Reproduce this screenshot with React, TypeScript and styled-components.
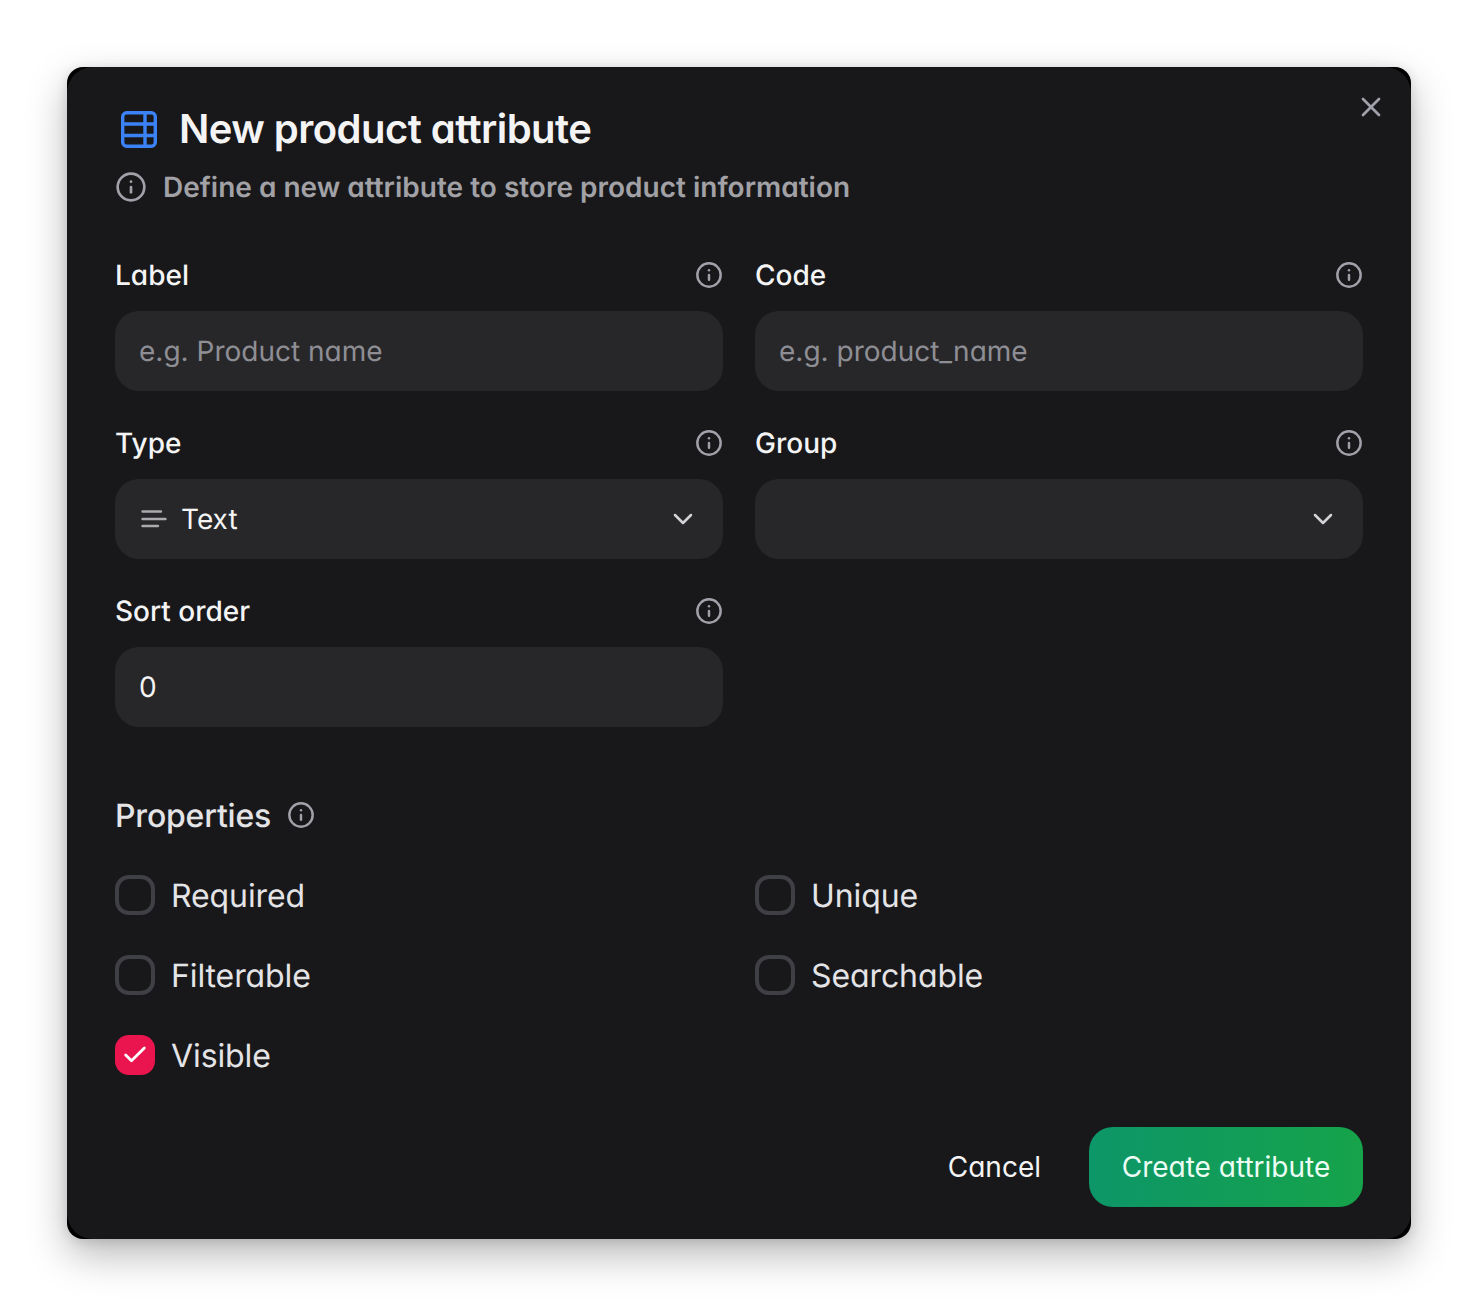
import React from "react";
import styled, { createGlobalStyle } from "styled-components";
import { Check, ChevronDown, Info, X } from "lucide-react";

const GlobalStyle = createGlobalStyle`
  html, body {
    margin: 0;
    background: #fff;
  }
  * {
    box-sizing: border-box;
  }
  body {
    font-family: Inter, "Liberation Sans", sans-serif;
    font-feature-settings: "cv11" 1;
    text-rendering: geometricPrecision;
  }
`;

const Page = styled.div`
  width: 1478px;
  height: 1306px;
  padding: 67px;
`;

// black sits behind the panel and only shows at the corners
const Shell = styled.div`
  width: 1344px;
  height: 1172px;
  border-radius: 16px;
  background: #000;
  box-shadow: 0 16px 40px rgba(0, 0, 0, 0.28), 0 2px 12px rgba(0, 0, 0, 0.12);
`;

const Panel = styled.div`
  position: relative;
  height: 100%;
  padding: 36px 48px 32px;
  border-radius: 26px;
  background: #18181b;
  color: #f4f4f5;
`;

const CloseButton = styled.button`
  position: absolute;
  top: 24px;
  right: 24px;
  display: flex;
  padding: 0;
  border: 0;
  background: none;
  color: #a1a1aa;
`;

const TitleRow = styled.div`
  display: flex;
  align-items: center;
  gap: 22px;
  height: 52px;
  padding-left: 6px;
`;

const Title = styled.h1`
  margin: 0;
  font-size: 40px;
  line-height: 52px;
  font-weight: 600;
  letter-spacing: -0.55px;
  color: #f4f4f5;
`;

const Subtitle = styled.div`
  display: flex;
  align-items: center;
  gap: 16px;
  height: 40px;
  margin-top: 12px;
  font-size: 28px;
  font-weight: 600;
  color: #a1a1a6;
`;

const FieldGrid = styled.div`
  display: grid;
  grid-template-columns: 608px 608px;
  column-gap: 32px;
  row-gap: 32px;
  margin-top: 48px;
`;

const Field = styled.div`
  display: flex;
  flex-direction: column;
  gap: 16px;
`;

const LabelRow = styled.div`
  display: flex;
  align-items: center;
  justify-content: space-between;
  height: 40px;
  font-size: 28px;
  font-weight: 500;
  color: #f4f4f5;
`;

const InfoIcon = styled(Info)`
  color: #a1a1aa;
  flex: none;
`;

const InputBox = styled.div<{ $muted?: boolean }>`
  display: flex;
  align-items: center;
  justify-content: space-between;
  height: 80px;
  padding: 0 24px;
  border-radius: 24px;
  background: #27272a;
  font-size: 28px;
  color: ${(p) => (p.$muted ? "#8e8e94" : "#f4f4f5")};
`;

const SelectValue = styled.div`
  display: flex;
  align-items: center;
  gap: 14px;
`;

const Chevron = styled(ChevronDown)`
  color: #d4d4d8;
`;

const PropertiesHeading = styled.div`
  display: flex;
  align-items: center;
  gap: 16px;
  height: 44px;
  margin-top: 66px;
  font-size: 32px;
  font-weight: 500;
  letter-spacing: -0.2px;
  color: #e4e4e7;
`;

const CheckGrid = styled.div`
  display: grid;
  grid-template-columns: 608px 608px;
  column-gap: 32px;
  row-gap: 40px;
  margin-top: 38px;
`;

const CheckRow = styled.div`
  display: flex;
  align-items: center;
  gap: 16px;
  height: 40px;
  font-size: 32px;
  letter-spacing: -0.1px;
  color: #e4e4e7;
`;

const CheckBox = styled.span<{ $checked?: boolean }>`
  display: flex;
  align-items: center;
  justify-content: center;
  width: 40px;
  height: 40px;
  border-radius: 14px;
  border: ${(p) => (p.$checked ? "0" : "4px solid #3f3f46")};
  background: ${(p) => (p.$checked ? "#ea154f" : "transparent")};
  color: #fff;
`;

const Footer = styled.div`
  display: flex;
  justify-content: flex-end;
  align-items: center;
  gap: 48px;
  margin-top: 52px;
`;

const CancelButton = styled.button`
  padding: 0;
  border: 0;
  background: none;
  font: inherit;
  font-size: 28px;
  color: #f4f4f5;
`;

const CreateButton = styled.button`
  width: 274px;
  height: 80px;
  padding: 0;
  border: 0;
  border-radius: 24px;
  background: linear-gradient(90deg, #0d9668, #16a34a);
  font: inherit;
  font-size: 28px;
  color: #ecfdf5;
`;

const TableIcon = () => (
  <svg width="36" height="37" viewBox="0 0 36 37" fill="none" stroke="#3b82f6" strokeWidth="3.4">
    <rect x="1.7" y="1.7" width="32.6" height="33.6" rx="4" />
    <path d="M2 13H34M2 24.5H34M24 2V35" />
  </svg>
);

const TextIcon = () => (
  <svg width="28" height="28" viewBox="0 0 28 28" fill="none" stroke="#aaaaae" strokeWidth="2.4" strokeLinecap="round">
    <path d="M3.5 6.5H22M3.5 14H26.5M3.5 21H19" />
  </svg>
);

const fields = [
  { label: "Label", value: "e.g. Product name", muted: true },
  { label: "Code", value: "e.g. product_name", muted: true },
  { label: "Type", value: "Text", select: true, icon: true },
  { label: "Group", value: "", select: true },
  { label: "Sort order", value: "0" },
];

const properties = [
  { label: "Required" },
  { label: "Unique" },
  { label: "Filterable" },
  { label: "Searchable" },
  { label: "Visible", checked: true },
];

export default function App() {
  return (
    <Page>
      <GlobalStyle />
      <Shell>
        <Panel>
          <CloseButton aria-label="Close">
            <X size={32} strokeWidth={2} />
          </CloseButton>
          <TitleRow>
            <TableIcon />
            <Title>New product attribute</Title>
          </TitleRow>
          <Subtitle>
            <InfoIcon size={32} strokeWidth={2} />
            Define a new attribute to store product information
          </Subtitle>

          <FieldGrid>
            {fields.map((f) => (
              <Field key={f.label}>
                <LabelRow>
                  {f.label}
                  <InfoIcon size={28} strokeWidth={2.1} />
                </LabelRow>
                <InputBox $muted={f.muted}>
                  <SelectValue>
                    {f.icon && <TextIcon />}
                    {f.value}
                  </SelectValue>
                  {f.select && <Chevron size={32} strokeWidth={1.9} />}
                </InputBox>
              </Field>
            ))}
          </FieldGrid>

          <PropertiesHeading>
            Properties
            <InfoIcon size={28} strokeWidth={2.1} />
          </PropertiesHeading>

          <CheckGrid>
            {properties.map((p) => (
              <CheckRow key={p.label}>
                <CheckBox $checked={p.checked}>
                  {p.checked && <Check size={28} strokeWidth={2.4} />}
                </CheckBox>
                {p.label}
              </CheckRow>
            ))}
          </CheckGrid>

          <Footer>
            <CancelButton>Cancel</CancelButton>
            <CreateButton>Create attribute</CreateButton>
          </Footer>
        </Panel>
      </Shell>
    </Page>
  );
}
